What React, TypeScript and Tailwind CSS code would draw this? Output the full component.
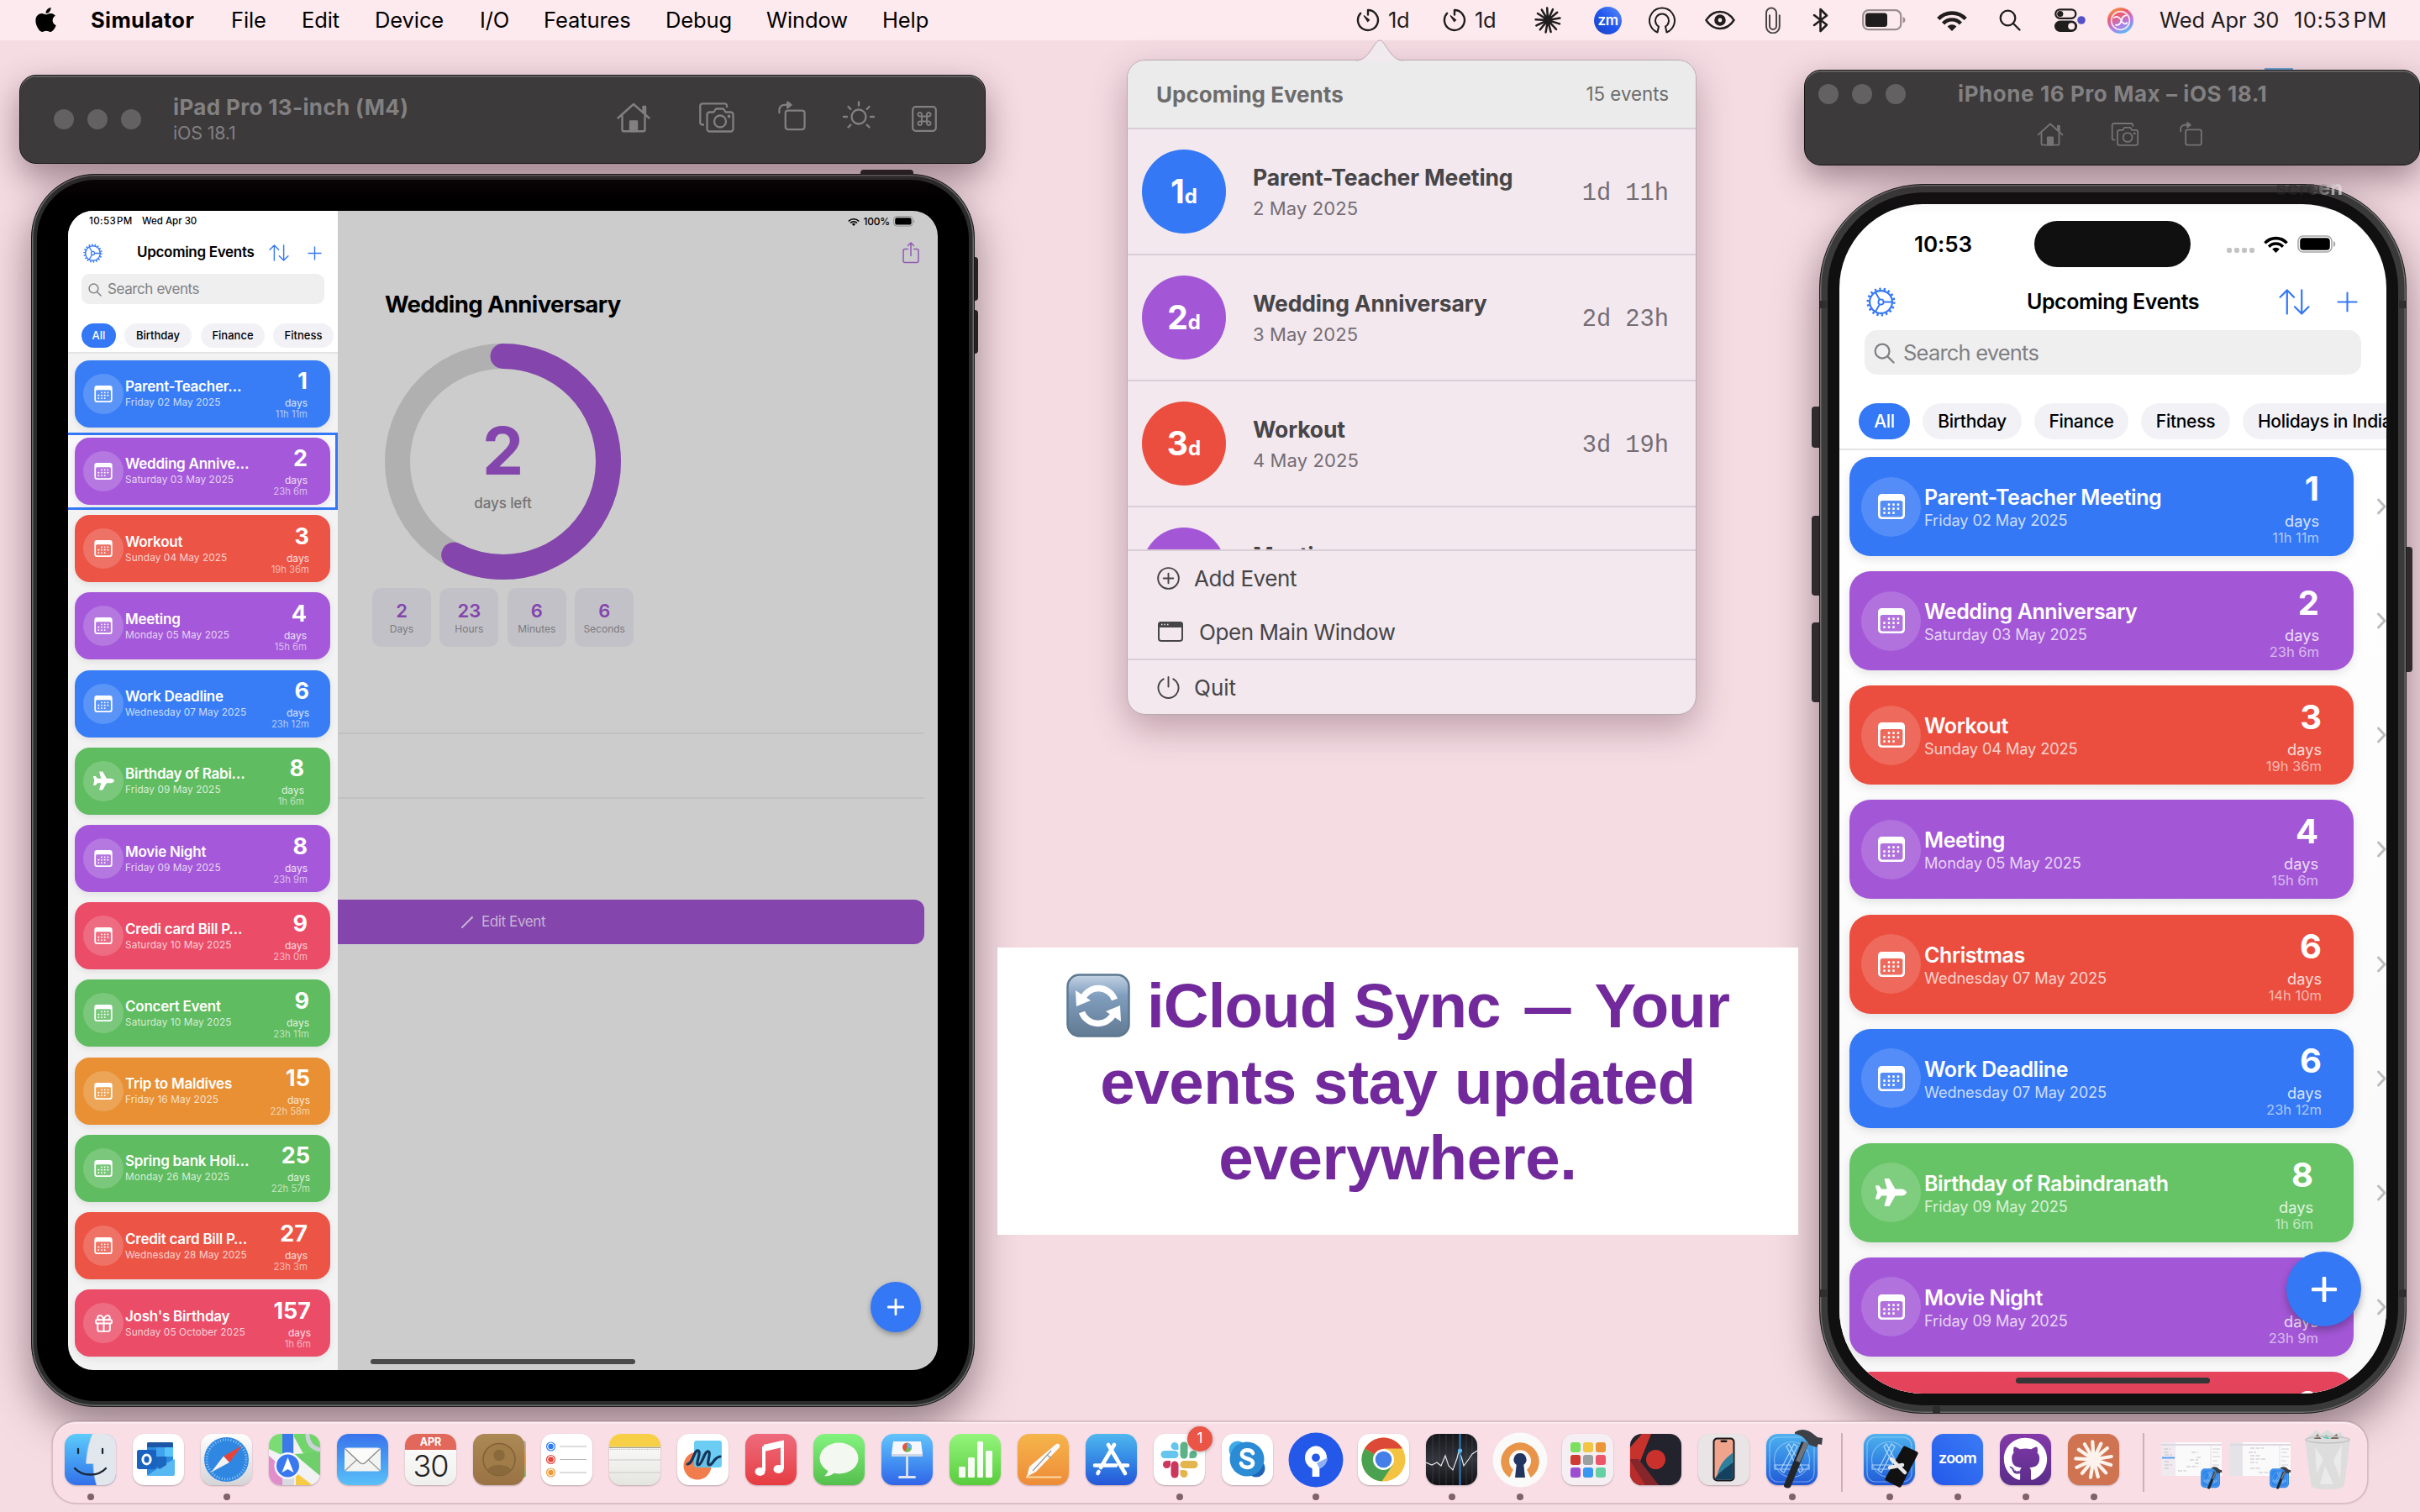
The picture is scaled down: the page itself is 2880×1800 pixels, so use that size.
import React from "react";
import { FaApple, FaGithub, FaPlane } from "react-icons/fa";
import { Gift } from "lucide-react";

type IconProps = { className?: string };

/* ---------- shared glyphs ---------- */

const Wifi = ({ className = "" }: IconProps) => (
  <svg viewBox="0 0 36 26" className={className} fill="none" stroke="currentColor" strokeWidth="4.4">
    <path d="M1.8 11.6A22 22 0 0 1 34.2 11.6" />
    <path d="M7.6 17A14 14 0 0 1 28.4 17" />
    <path d="M18 26l-5.4-5.6a7.6 7.6 0 0 1 10.8 0z" fill="currentColor" stroke="none" />
  </svg>
);

const Gear = ({ className = "" }: IconProps) => (
  <svg viewBox="0 0 36 36" className={className} fill="none" stroke="currentColor">
    <circle cx="18" cy="18" r="16" strokeWidth="3" strokeDasharray="2.4 3.185" />
    <circle cx="18" cy="18" r="13.8" strokeWidth="2.2" />
    <circle cx="18" cy="18" r="3.2" strokeWidth="1.9" />
    <path d="M21.2 18h10M16.4 15.2L11.4 6.4M16.4 20.8l-5 8.8" strokeWidth="2" />
  </svg>
);

const Sort = ({ className = "" }: IconProps) => (
  <svg viewBox="0 0 38 32" className={className} fill="none" stroke="currentColor" strokeWidth="2.3" strokeLinecap="round" strokeLinejoin="round">
    <path d="M10 30.5V1.5M1.5 10L10 1.5l8.5 8.5M28 1.5v29M19.5 22l8.500 8.500 8.500-8.500" />
  </svg>
);

const Plus = ({ className = "", w = 2.2 }: IconProps & { w?: number }) => (
  <svg viewBox="0 0 26 26" className={className} fill="none" stroke="currentColor" strokeWidth={w} strokeLinecap="round">
    <path d="M13 1.5v23M1.5 13h23" />
  </svg>
);

const Search = ({ className = "" }: IconProps) => (
  <svg viewBox="0 0 26 26" className={className} fill="none" stroke="currentColor" strokeWidth="2.3" strokeLinecap="round">
    <circle cx="10.5" cy="10.5" r="8.8" />
    <path d="M17 17l7.5 7.5" />
  </svg>
);

const calendarDots = [
  [13, 12.6], [18.5, 12.6], [24, 12.6],
  [7.5, 17.6], [13, 17.6], [18.5, 17.6], [24, 17.6],
  [7.5, 22.6], [13, 22.6], [18.5, 22.6],
];

const CalendarGlyph = ({ className = "" }: IconProps) => (
  <svg viewBox="0 0 32 30" className={className} fill="currentColor">
    <path fillRule="evenodd" d="M4.500 0h23A4.500 4.500 0 0 1 32 4.500v21a4.500 4.500 0 0 1-4.500 4.500h-23A4.500 4.500 0 0 1 0 25.500v-21A4.500 4.500 0 0 1 4.500 0zM2.600 10.500v14.200c0 1.600 1 2.700 2.700 2.700h21.400c1.700 0 2.700-1.100 2.700-2.700V10.500c0-1.600-1-2.500-2.700-2.500H5.300c-1.700 0-2.700.9-2.700 2.500z" />
    {calendarDots.map(([x, y]) => (
      <rect key={`${x}-${y}`} x={x - 1.3} y={y - 1.3} width="2.6" height="2.6" rx="0.7" />
    ))}
  </svg>
);

const Home = ({ className = "" }: IconProps) => (
  <svg viewBox="0 0 40 36" className={className} fill="none" stroke="currentColor" strokeWidth="2.4" strokeLinejoin="round" strokeLinecap="round">
    <path d="M1.5 18.5L20 2l18.500 16.500M31.500 12V5h2.500v9.500" />
    <path d="M6.500 16v16.500c0 1 .7 1.700 1.700 1.700h23.600c1 0 1.700-.7 1.700-1.700V16" />
    <path d="M16 34v-11.500h8V34z" fill="currentColor" />
  </svg>
);

const Cameras = ({ className = "" }: IconProps) => (
  <svg viewBox="0 0 42 36" className={className} fill="none" stroke="currentColor" strokeWidth="2.3" strokeLinejoin="round">
    <path d="M6 26.500H4A2.700 2.700 0 0 1 1.300 24V4A2.700 2.700 0 0 1 4 1.300h26A2.700 2.700 0 0 1 33 4v2" />
    <path d="M12.500 11.500h5l2.500-4h9l2.500 4h6a3 3 0 0 1 3 3v17a3 3 0 0 1-3 3h-25a3 3 0 0 1-3-3v-17a3 3 0 0 1 3-3z" />
    <circle cx="25" cy="22.5" r="7" />
    <circle cx="35.5" cy="16.5" r="0.8" fill="currentColor" />
  </svg>
);

const Rotate = ({ className = "" }: IconProps) => (
  <svg viewBox="0 0 34 36" className={className} fill="none" stroke="currentColor" strokeWidth="2.3" strokeLinejoin="round" strokeLinecap="round">
    <rect x="9" y="11.5" width="23.5" height="23" rx="3" />
    <path d="M1.500 14v-3.500a6 6 0 0 1 6-6H15" />
    <path d="M11.500 1l4.500 3.500-4.500 3.500z" fill="currentColor" />
  </svg>
);

const Sun = ({ className = "" }: IconProps) => (
  <svg viewBox="0 0 40 36" className={className} fill="none" stroke="currentColor" strokeWidth="2.4" strokeLinecap="round">
    <circle cx="20" cy="19" r="8.5" />
    <path d="M20 1.500v4M2 19h4M34 19h4M7.500 7l2.800 2.800M32.500 7l-2.800 2.800M7.500 31.500l2.800-2.800M32.500 31.500l-2.800-2.800" />
  </svg>
);

const CommandKey = ({ className = "" }: IconProps) => (
  <svg viewBox="0 0 30 31" className={className} fill="none" stroke="currentColor" strokeWidth="2.2">
    <rect x="1.2" y="1.2" width="27.6" height="28.6" rx="3.5" />
    <path strokeWidth="1.9" d="M12 12.500h6v6h-6zM12 12.500h-2.200a2.300 2.300 0 1 1 2.200-2.300zM18 12.500h2.200a2.300 2.300 0 1 0-2.200-2.300zM12 18.500h-2.200a2.300 2.300 0 1 0 2.200 2.300zM18 18.500h2.200a2.300 2.300 0 1 1-2.200 2.300z" />
  </svg>
);

const Burst = ({ className = "", w = 3 }: IconProps & { w?: number }) => (
  <svg viewBox="0 0 40 40" className={className} stroke="currentColor" strokeWidth={w} strokeLinecap="round">
    <path d="M20 20L19 2M20 20l7.500-16M20 20L34 8.500M20 20l18-3M20 20l17.500 5.500M20 20l12.500 13.500M20 20l4.500 17.500M20 20l-3 18M20 20L8.500 34M20 20L3 28M20 20L2 19M20 20L5 10M20 20L11 4.500" />
  </svg>
);

/* ---------- menu bar ---------- */

const Timer = ({ className = "" }: IconProps) => (
  <svg viewBox="0 0 28 28" className={className} fill="none" stroke="currentColor" strokeWidth="2.4" strokeLinecap="round">
    <path d="M14 2v5.500M14 2A12 12 0 1 1 5.200 5.800" />
    <path d="M9 8.500l6.500 5.200-1.800 1.800z" fill="currentColor" strokeWidth="1.2" />
  </svg>
);

const menus = [
  { label: "File", cls: "w-[84px]" },
  { label: "Edit", cls: "w-[87px]" },
  { label: "Device", cls: "w-[125px]" },
  { label: "I/O", cls: "w-[76px]" },
  { label: "Features", cls: "w-[145px]" },
  { label: "Debug", cls: "w-[120px]" },
  { label: "Window", cls: "w-[138px]" },
  { label: "Help", cls: "w-[80px]" },
];

function MenuBar() {
  return (
    <header className="flex h-12 w-full items-center bg-[#fdeaee] pr-[36px] pl-10 text-[25.5px] leading-none tracking-[-0.1px] text-black">
      <FaApple className="-mt-0.5 h-[33px] w-[29px]" />
      <span className="ml-[39px] w-[167px] font-bold tracking-[0.4px]">Simulator</span>
      {menus.map((m) => (
        <span key={m.label} className={m.cls}>{m.label}</span>
      ))}
      <div className="ml-auto flex items-center text-[#1f1d1e]">
        <Timer className="h-7 w-7" />
        <span className="ml-[10px] w-[27px] tracking-[-0.3px]">1d</span>
        <Timer className="ml-[38px] h-7 w-7" />
        <span className="ml-[10px] w-[27px] tracking-[-0.3px]">1d</span>
        <Burst className="ml-[44px] h-8 w-8" w={3.2} />
        <span className="ml-[39px] flex h-[33px] w-[33px] items-center justify-center rounded-full bg-gradient-to-tr from-[#1b3fc4] via-[#2257ee] to-[#5b8df5] text-[17px] font-semibold tracking-[-0.5px] text-white">zm</span>
        <svg viewBox="0 0 32 32" className="ml-8 h-8 w-8" fill="none" stroke="currentColor" strokeWidth="2" strokeLinejoin="round">
          <path d="M10.500 30.500A15 15 0 1 1 21.500 30.500L20 23.500A8 8 0 1 0 12 23.500z" />
        </svg>
        <svg viewBox="0 0 36 24" className="ml-[35px] h-6 w-9" fill="none" stroke="currentColor" strokeWidth="2.4">
          <path d="M1.500 12C6 5 11.500 2 18 2s12 3 16.500 10c-4.500 7-10 10-16.500 10S6 19 1.500 12z" />
          <circle cx="18" cy="12" r="4.6" strokeWidth="4.4" />
        </svg>
        <svg viewBox="0 0 18 32" className="ml-9 h-8 w-[18px]" fill="none" stroke="#4b4547" strokeWidth="2">
          <path d="M5 9.500v13.500a4 4 0 0 0 8 0V7.500a6 6 0 0 0-12 0v16a7.500 7.500 0 0 0 15.800 0V9.500" />
        </svg>
        <svg viewBox="0 0 20 30" className="ml-[38px] h-[30px] w-5" fill="none" stroke="currentColor" strokeWidth="2.6" strokeLinejoin="round" strokeLinecap="round">
          <path d="M2 9l15 11.500-7.500 7.500V2l7.500 7.500L2 21" />
        </svg>
        <svg viewBox="0 0 52 26" className="ml-[39px] h-[26px] w-[52px]" fill="none">
          <rect x="1.2" y="1.2" width="45" height="23" rx="6.5" stroke="#9b8e92" strokeWidth="2.2" />
          <rect x="4" y="4.5" width="26" height="16.5" rx="3.500" fill="#1f1d1e" />
          <path d="M48.500 9c2.200.8 3 2.200 3 3.800s-.8 3-3 3.800z" fill="#9b8e92" />
        </svg>
        <Wifi className="ml-[37px] h-[26px] w-9" />
        <Search className="ml-[38px] h-[26px] w-[26px]" />
        <svg viewBox="0 0 37 28" className="ml-10 h-7 w-[37px]">
          <rect x="1.3" y="1.3" width="24" height="10.5" rx="5.2" fill="none" stroke="currentColor" strokeWidth="2.3" />
          <circle cx="6.8" cy="6.5" r="3.6" fill="currentColor" />
          <rect x="0" y="14.5" width="27" height="13.5" rx="6.7" fill="currentColor" />
          <circle cx="20.2" cy="21.2" r="4" fill="#fdeaee" />
          <circle cx="32" cy="14" r="4.8" fill="#5552c8" />
        </svg>
        <svg viewBox="0 0 30 30" className="ml-[26px] h-[31px] w-[31px]">
          <defs>
            <linearGradient id="siri" x1="0.2" y1="0" x2="0.7" y2="1">
              <stop offset="0" stopColor="#f2a23c" />
              <stop offset="0.3" stopColor="#ee5b6e" />
              <stop offset="0.65" stopColor="#b47be6" />
              <stop offset="1" stopColor="#4fc0f5" />
            </linearGradient>
          </defs>
          <circle cx="15" cy="15" r="15" fill="url(#siri)" />
          <circle cx="15" cy="15" r="10.5" fill="none" stroke="#fbe6ee" strokeWidth="1.6" />
          <path d="M7 12c4-3 7-1 9 3s5 5 7 2M9 20c4 1 6-1 7-5s3-6 6-6" fill="none" stroke="#fff" strokeWidth="1.6" />
        </svg>
        <span className="ml-[31px] w-[160px] tracking-[-0.1px] whitespace-nowrap">Wed Apr 30</span>
        <span className="w-[114px] tracking-[0.5px] whitespace-nowrap">10:53<span className="ml-[3px]">PM</span></span>
      </div>
    </header>
  );
}

/* ---------- events ---------- */

const tones = {
  blue: "bg-[#3478f6]",
  purple: "bg-[#a357d7]",
  red: "bg-[#eb4e3e]",
  green: "bg-[#67c466]",
};

const padTones = {
  blue: "bg-[#387df6]",
  purple: "bg-[#a559da]",
  red: "bg-[#ec5445]",
  green: "bg-[#5fbc60]",
  pink: "bg-[#eb4c67]",
  orange: "bg-[#e89033]",
};

type PadEvent = { title: string; date: string; n: string; time: string; tone: keyof typeof padTones; icon?: "plane" | "gift"; pr: string };

const padEvents: PadEvent[] = [
  { title: "Parent-Teacher…", date: "Friday 02 May 2025", n: "1", time: "11h 11m", tone: "blue", pr: "pr-[27px]" },
  { title: "Wedding Annive…", date: "Saturday 03 May 2025", n: "2", time: "23h 6m", tone: "purple", pr: "pr-[27px]" },
  { title: "Workout", date: "Sunday 04 May 2025", n: "3", time: "19h 36m", tone: "red", pr: "pr-[25px]" },
  { title: "Meeting", date: "Monday 05 May 2025", n: "4", time: "15h 6m", tone: "purple", pr: "pr-[28px]" },
  { title: "Work Deadline", date: "Wednesday 07 May 2025", n: "6", time: "23h 12m", tone: "blue", pr: "pr-[25px]" },
  { title: "Birthday of Rabi…", date: "Friday 09 May 2025", n: "8", time: "1h 6m", tone: "green", icon: "plane", pr: "pr-[31px]" },
  { title: "Movie Night", date: "Friday 09 May 2025", n: "8", time: "23h 9m", tone: "purple", pr: "pr-[27px]" },
  { title: "Credi card Bill P…", date: "Saturday 10 May 2025", n: "9", time: "23h 0m", tone: "pink", pr: "pr-[27px]" },
  { title: "Concert Event", date: "Saturday 10 May 2025", n: "9", time: "23h 11m", tone: "green", pr: "pr-[25px]" },
  { title: "Trip to Maldives", date: "Friday 16 May 2025", n: "15", time: "22h 58m", tone: "orange", pr: "pr-[24px]" },
  { title: "Spring bank Holi…", date: "Monday 26 May 2025", n: "25", time: "22h 57m", tone: "green", pr: "pr-[24px]" },
  { title: "Credit card Bill P…", date: "Wednesday 28 May 2025", n: "27", time: "23h 3m", tone: "red", pr: "pr-[27px]" },
  { title: "Josh's Birthday", date: "Sunday 05 October 2025", n: "157", time: "1h 6m", tone: "pink", icon: "gift", pr: "pr-[23px]" },
];

function PadIcon({ icon }: { icon?: "plane" | "gift" }) {
  if (icon === "plane") return <FaPlane className="h-[23px] w-[25px]" />;
  if (icon === "gift") return <Gift className="h-[25px] w-[25px]" strokeWidth={1.9} />;
  return <CalendarGlyph className="h-5 w-[22px]" />;
}

function PadCard({ e }: { e: PadEvent }) {
  return (
    <div className={`relative flex h-20 shrink-0 rounded-[18px] pl-2.5 text-white shadow-[0_3px_8px_rgba(0,0,0,0.08)] ${padTones[e.tone]} ${e.pr}`}>
      <div className="mt-4 flex h-12 w-12 items-center justify-center rounded-full bg-white/18">
        <PadIcon icon={e.icon} />
      </div>
      <div className="ml-0.5 pt-[22.5px] whitespace-nowrap">
        <div className="text-[17px] leading-[18px] font-semibold tracking-[-0.25px]">{e.title}</div>
        <div className="mt-1 text-[11.8px] leading-[13px] tracking-[0.1px] text-white/75">{e.date}</div>
      </div>
      <div className="ml-auto flex flex-col items-end pt-[11.5px] whitespace-nowrap">
        <div className="text-[27px] leading-[27px] font-bold">{e.n}</div>
        <div className="mt-1.5 text-[12px] leading-[13px] text-white/80">days</div>
        <div className="mt-px text-[11.3px] leading-[13px] text-white/60">{e.time}</div>
      </div>
    </div>
  );
}

/* ---------- iPad window ---------- */

function PadSidebar() {
  return (
    <aside className="flex h-full w-[321px] shrink-0 flex-col bg-[#f3f3f4]">
      <div className="h-[170px] shrink-0 border-b-2 border-[#e4e4e6] bg-white">
        <div className="flex items-center pt-[6px] pl-[25px] text-[11.5px] leading-[12px] font-medium whitespace-nowrap text-black">
          <span className="w-[63px] tracking-[0.4px]">10:53<span className="ml-px">PM</span></span>
          <span>Wed Apr 30</span>
        </div>
        <div className="mt-5 flex h-6 items-center pl-[18px] text-[#3478f6]">
          <Gear className="h-[23px] w-[23px]" />
          <span className="ml-[41px] w-[157px] text-[17px] font-semibold tracking-[-0.3px] whitespace-nowrap text-black">Upcoming Events</span>
          <Sort className="h-5 w-6" />
          <Plus className="ml-[22px] h-[17px] w-[17px]" />
        </div>
        <div className="mt-[13px] ml-4 flex h-9 w-[289px] items-center rounded-[9px] bg-[#efefef] pt-px pl-2 text-[17px] tracking-[-0.4px] text-[#7f7f84]">
          <Search className="mr-[7px] h-4 w-4" />
          Search events
        </div>
        <div className="mt-[23px] ml-4 flex text-[13px] leading-[29px] font-medium text-black">
          <span className="w-[41px] rounded-full bg-[#3478f6] text-center text-white">All</span>
          <span className="ml-2.5 w-[80px] rounded-full bg-[#f2f1f6] text-center">Birthday</span>
          <span className="ml-[11px] w-[76px] rounded-full bg-[#f2f1f6] text-center">Finance</span>
          <span className="ml-2.5 w-[72px] rounded-full bg-[#f2f1f6] text-center">Fitness</span>
        </div>
      </div>
      <div className="relative flex flex-col gap-[12.24px] pt-[7.6px] pr-[9px] pl-2">
        <div className="absolute top-[94px] -left-1 h-[92px] w-[325px] border-[3px] border-[#3478f6] bg-[#f8f8fa]" />
        {padEvents.map((e) => (
          <PadCard key={e.title} e={e} />
        ))}
      </div>
    </aside>
  );
}

function CountTile({ n, label }: { n: string; label: string }) {
  return (
    <div className="flex h-[70px] w-[70px] flex-col items-center rounded-[11px] bg-[#c2c1c7] pt-4">
      <div className="text-[22px] leading-[22px] font-semibold text-[#8445ad]">{n}</div>
      <div className="mt-[5px] text-[12px] leading-[12px] text-[#7b7a7f]">{label}</div>
    </div>
  );
}

function PadDetail() {
  return (
    <section className="relative flex h-full flex-1 flex-col bg-[#cccccc]">
      <div className="flex h-6 items-center justify-end gap-1 pt-[1px] pr-[27px] text-[12px] font-medium text-black">
        <Wifi className="h-[10px] w-[14px]" />
        <span className="tracking-[-0.2px]">100%</span>
        <svg viewBox="0 0 26 13" className="h-[13px] w-[26px]">
          <rect x="0.6" y="0.6" width="22.5" height="11.5" rx="3.5" fill="none" stroke="#8f8f8f" />
          <rect x="2.2" y="2.2" width="19.4" height="8.4" rx="2.2" />
          <path d="M24.300 4.500c1.400.6 1.400 3.200 0 3.800z" fill="#8f8f8f" />
        </svg>
      </div>
      <div className="flex justify-end pt-3 pr-[22px] text-[#8f5bb4]">
        <svg viewBox="0 0 20 26" className="h-[27px] w-5" fill="none" stroke="currentColor" strokeWidth="1.5" strokeLinecap="round">
          <path d="M6.500 9H3a2 2 0 0 0-2 2v12a2 2 0 0 0 2 2h14a2 2 0 0 0 2-2V11a2 2 0 0 0-2-2h-3.500M10 17V1.500M6.500 5L10 1.500 13.500 5" />
        </svg>
      </div>
      <h2 className="mt-[34px] ml-[56px] text-[27.5px] leading-[28px] font-bold tracking-[-0.6px] text-black">Wedding Anniversary</h2>
      <div className="relative mt-[33px] ml-[56px] h-[281px] w-[281px]">
        <svg viewBox="0 0 281 281" className="h-full w-full -rotate-90" fill="none" strokeWidth="30">
          <circle cx="140.5" cy="140.5" r="125.5" stroke="#b0b0b0" />
          <circle cx="140.5" cy="140.5" r="125.5" stroke="#8445ad" strokeLinecap="round" pathLength="360" strokeDasharray="207.7 360" />
        </svg>
        <div className="absolute inset-0 flex flex-col items-center pt-[88px]">
          <div className="text-[78px] leading-[80px] font-bold text-[#8445ad]">2</div>
          <div className="mt-[13px] text-[17px] leading-[18px] font-medium tracking-[-0.1px] text-[#747474]">days left</div>
        </div>
      </div>
      <div className="mt-[10px] ml-[41px] flex gap-[10.4px]">
        <CountTile n="2" label="Days" />
        <CountTile n="23" label="Hours" />
        <CountTile n="6" label="Minutes" />
        <CountTile n="6" label="Seconds" />
      </div>
      <div className="mt-[102px] mr-[16px] h-[79px] border-y-2 border-[#c1c1c1]" />
      <div className="mt-[120px] mr-[16px] flex h-[53px] items-center rounded-r-xl bg-[#8445ad] pl-[147px] text-[17px] tracking-[-0.4px] text-[#c9b3d6]">
        <svg viewBox="0 0 14 14" className="mr-2.5 h-[14px] w-[14px]" stroke="currentColor" fill="none" strokeLinecap="round">
          <path d="M1 13L11 3" strokeWidth="2" />
          <path d="M12 2l.8-.8" strokeWidth="2.4" />
        </svg>
        Edit Event
      </div>
      <div className="absolute right-5 bottom-[45px] flex h-[60px] w-[60px] items-center justify-center rounded-full bg-[#3478f6] text-white shadow-[0_3px_6px_rgba(0,0,0,0.3)]">
        <Plus className="h-5 w-5" w={3.6} />
      </div>
      <div className="absolute bottom-[7px] left-[39px] h-[6px] w-[315px] rounded-full bg-[#494949]" />
    </section>
  );
}

function PadWindow() {
  return (
    <>
      <div className="absolute top-[202px] left-[1024px] h-2 w-[63px] rounded-t bg-[#232523]" />
      <div className="absolute top-[306px] left-[1156px] h-[52px] w-2 rounded-r bg-[#232523]" />
      <div className="absolute top-[369px] left-[1156px] h-[52px] w-2 rounded-r bg-[#232523]" />
      <div className="absolute top-[207px] left-[37px] h-[1468px] w-[1123px] rounded-[76px] border border-[#161716] bg-[#2b2d2c] p-1.5 shadow-[inset_0_0_0_1.5px_#6c6e6d,0_22px_50px_rgba(50,25,35,0.5)]">
        <div className="h-full w-full rounded-[70px] bg-black px-[37px] pt-[37px] pb-[37px]">
          <div className="flex h-full w-full overflow-hidden rounded-[30px]">
            <PadSidebar />
            <PadDetail />
          </div>
        </div>
      </div>
      <div className="absolute top-[89px] left-[23px] flex h-[106px] w-[1150px] items-center rounded-[20px] border border-[#161516] bg-[#3c3a3b] pl-10 text-[#828081] shadow-[inset_0_1.5px_0_#706e6f,0_16px_40px_rgba(50,25,35,0.45)]">
        <div className="flex gap-4">
          <span className="h-6 w-6 rounded-full bg-[#636162]" />
          <span className="h-6 w-6 rounded-full bg-[#636162]" />
          <span className="h-6 w-6 rounded-full bg-[#636162]" />
        </div>
        <div className="ml-[38px] w-[528px]">
          <div className="text-[26px] leading-[28px] font-bold tracking-[0.35px]">iPad Pro 13-inch (M4)</div>
          <div className="mt-1 text-[21.5px] leading-6 tracking-[-0.2px]">iOS 18.1</div>
        </div>
        <Home className="-mt-1 h-9 w-10" />
        <Cameras className="-mt-1 ml-[58px] h-9 w-[42px]" />
        <Rotate className="-mt-2 ml-[52px] h-9 w-[33px]" />
        <Sun className="-mt-2 ml-[43px] h-9 w-10" />
        <CommandKey className="-mt-0.5 ml-[43px] h-[31px] w-[30px]" />
      </div>
    </>
  );
}

/* ---------- menu bar popover ---------- */

function PopRow({ n, title, date, left, tone }: { n: string; title: string; date: string; left: string; tone: string }) {
  return (
    <div className="flex h-[150px] shrink-0 items-start border-b-2 border-[#d9ced6] pr-8 pl-[17px]">
      <div className={`mt-6 flex h-[100px] w-[100px] items-baseline justify-center rounded-full pt-[25px] font-bold text-white ${tone}`}>
        <span className="text-[39px] leading-[50px]">{n}</span>
        <span className="text-[24px] leading-[50px]">d</span>
      </div>
      <div className="ml-[32px] pt-[43px]">
        <div className="text-[26.5px] leading-[28px] font-bold tracking-[-0.15px] text-[#474547]">{title}</div>
        <div className="mt-[11px] text-[22px] leading-6 tracking-[0.1px] text-[#756d74]">{date}</div>
      </div>
      <div className="ml-auto pt-[63px] font-['Liberation_Mono',monospace] text-[28.7px] leading-[28px] whitespace-pre text-[#756d74]">{left}</div>
    </div>
  );
}

function Popover() {
  return (
    <div className="absolute top-[71px] left-[1341px] h-[780px] w-[678px] rounded-[22px] border border-[#b9a8af] bg-[#f2e8ee] shadow-[0_16px_44px_rgba(60,20,40,0.3)]">
      <svg viewBox="0 0 56 27" className="absolute -top-[25px] left-[272px] h-[27px] w-14">
        <path d="M0 25.500C9 25 13 19 18 12c4-6 7-11 10-11s6 5 10 11c5 7 9 13 18 13.500V27H0z" fill="#f0e9ed" />
        <path d="M0 25C9 24.500 13 19 18 12c4-6 7-11 10-11s6 5 10 11c5 7 9 12.500 18 13" fill="none" stroke="#b9a8af" />
      </svg>
      <div className="flex h-full flex-col overflow-hidden rounded-[21px]">
        <div className="flex h-[82px] shrink-0 items-center justify-between border-b-2 border-[#d9ced6] bg-[#ebebeb] pr-8 pl-[34px] text-[#6d6c6c]">
          <span className="text-[26px] font-bold">Upcoming Events</span>
          <span className="text-[22.3px]">15 events</span>
        </div>
        <div className="flex h-[500px] shrink-0 flex-col overflow-hidden">
          <PopRow n="1" title="Parent-Teacher Meeting" date="2 May 2025" left="1d 11h" tone="bg-[#3478f6]" />
          <PopRow n="2" title="Wedding Anniversary" date="3 May 2025" left="2d 23h" tone="bg-[#a357d7]" />
          <PopRow n="3" title="Workout" date="4 May 2025" left="3d 19h" tone="bg-[#eb4e3e]" />
          <PopRow n="4" title="Meeting" date="5 May 2025" left="4d 15h" tone="bg-[#a357d7]" />
        </div>
        <div className="flex h-[132px] shrink-0 flex-col border-y-2 border-[#d9ced6] text-[26px] tracking-[-0.42px] text-[#474547]">
          <div className="flex h-16 items-center pl-[35px]">
            <svg viewBox="0 0 28 28" className="mr-[17px] h-[27px] w-[27px]" fill="none" stroke="currentColor" strokeWidth="2" strokeLinecap="round">
              <circle cx="14" cy="14" r="12.8" />
              <path d="M14 8v12M8 14h12" />
            </svg>
            Add Event
          </div>
          <div className="flex h-16 items-center pl-9">
            <svg viewBox="0 0 30 24" className="mr-[19px] h-6 w-[30px]" fill="none" stroke="currentColor" strokeWidth="2">
              <rect x="1" y="1" width="28" height="22" rx="3" />
              <path d="M1 4a3 3 0 0 1 3-3h22a3 3 0 0 1 3 3v2H1z" fill="currentColor" />
              <path d="M4 3.500h1.500M7.500 3.500H9M11 3.500h1.500" stroke="#f2e8ee" strokeWidth="1.6" />
            </svg>
            Open Main Window
          </div>
        </div>
        <div className="flex flex-1 items-center pt-px pl-[35px] text-[26px] text-[#474547]">
          <svg viewBox="0 0 28 28" className="mr-[17px] h-[27px] w-[27px]" fill="none" stroke="currentColor" strokeWidth="2" strokeLinecap="round">
            <path d="M14 1v12M8 3.500a12.500 12.500 0 1 0 12 0" />
          </svg>
          Quit
        </div>
      </div>
    </div>
  );
}

/* ---------- caption ---------- */

function Caption() {
  return (
    <div className="absolute top-[1128px] left-[1187px] h-[342px] w-[953px] bg-white pt-[25px] text-center font-['Liberation_Sans',Arial,sans-serif] text-[74.5px] leading-[90.5px] font-bold tracking-[-0.4px] text-[#72299b]">
      <div className="flex items-center justify-center tracking-[-0.9px]">
        <svg viewBox="0 0 76 76" className="-mt-0.5 mr-[20px] h-[76px] w-[76px]">
          <defs>
            <linearGradient id="sync" x1="0" y1="0" x2="0" y2="1">
              <stop offset="0" stopColor="#c3d3e3" />
              <stop offset="0.35" stopColor="#7f9dbd" />
              <stop offset="1" stopColor="#627a93" />
            </linearGradient>
          </defs>
          <rect x="1.5" y="1.5" width="73" height="73" rx="14" fill="url(#sync)" stroke="#5d7890" strokeWidth="2.5" />
          <path d="M19 31a20.500 20.500 0 0 1 38.500 0M57 46a20.500 20.500 0 0 1-38.500 0" fill="none" stroke="#fff" strokeWidth="7.5" />
          <path d="M11 20l1 19 17-7zM65 57l-1-19-17 7z" fill="#fff" />
        </svg>
        <span>iCloud Sync <span className="inline-block scale-x-[0.74]">—</span> Your</span>
      </div>
      <div>events stay updated</div>
      <div>everywhere.</div>
    </div>
  );
}

/* ---------- iPhone window ---------- */

type PhoneEvent = { title: string; date: string; n: string; time: string; tone: keyof typeof tones; plane?: boolean; pr: string };

const phoneEvents: PhoneEvent[] = [
  { title: "Parent-Teacher Meeting", date: "Friday 02 May 2025", n: "1", time: "11h 11m", tone: "blue", pr: "pr-[41px]" },
  { title: "Wedding Anniversary", date: "Saturday 03 May 2025", n: "2", time: "23h 6m", tone: "purple", pr: "pr-[41px]" },
  { title: "Workout", date: "Sunday 04 May 2025", n: "3", time: "19h 36m", tone: "red", pr: "pr-[38px]" },
  { title: "Meeting", date: "Monday 05 May 2025", n: "4", time: "15h 6m", tone: "purple", pr: "pr-[42px]" },
  { title: "Christmas", date: "Wednesday 07 May 2025", n: "6", time: "14h 10m", tone: "red", pr: "pr-[38px]" },
  { title: "Work Deadline", date: "Wednesday 07 May 2025", n: "6", time: "23h 12m", tone: "blue", pr: "pr-[38px]" },
  { title: "Birthday of Rabindranath", date: "Friday 09 May 2025", n: "8", time: "1h 6m", tone: "green", plane: true, pr: "pr-[48px]" },
  { title: "Movie Night", date: "Friday 09 May 2025", n: "8", time: "23h 9m", tone: "purple", pr: "pr-[42px]" },
];

function PhoneRow({ e }: { e: PhoneEvent }) {
  return (
    <div className="flex shrink-0 items-center">
      <div className={`flex h-[118px] w-[600px] shrink-0 rounded-[25px] pl-[14px] text-white shadow-[0_4px_12px_rgba(0,0,0,0.1)] ${tones[e.tone]} ${e.pr}`}>
        <div className="mt-[23.5px] flex h-[71px] w-[71px] items-center justify-center rounded-full bg-white/16">
          {e.plane ? <FaPlane className="h-[33px] w-[37px]" /> : <CalendarGlyph className="h-[30px] w-8" />}
        </div>
        <div className="ml-[4px] pt-[35px] whitespace-nowrap">
          <div className="text-[25px] leading-[26px] font-semibold tracking-[-0.42px]">{e.title}</div>
          <div className="mt-[4px] text-[18.2px] leading-5 tracking-[-0.1px] text-white/75">{e.date}</div>
        </div>
        <div className="ml-auto flex flex-col items-end pt-[18px] whitespace-nowrap">
          <div className="text-[40px] leading-10 font-bold">{e.n}</div>
          <div className="mt-2 text-[18.2px] leading-5 text-white/80">days</div>
          <div className="text-[16.5px] leading-5 text-white/60">{e.time}</div>
        </div>
      </div>
      <svg viewBox="0 0 12 20" className="ml-[27px] h-5 w-3 shrink-0" fill="none" stroke="#bdbdc0" strokeWidth="3" strokeLinecap="round" strokeLinejoin="round">
        <path d="M2.500 2l7.500 8-7.500 8" />
      </svg>
    </div>
  );
}

function PhoneScreen() {
  return (
    <div className="relative flex h-full w-full flex-col overflow-hidden rounded-[100px] bg-white">
      <div className="flex h-[95px] shrink-0 items-center">
        <span className="ml-[89px] w-[143px] text-[26px] font-semibold tracking-[-0.1px] text-black">10:53</span>
        <span className="h-[55px] w-[186px] rounded-full bg-[#111011]" />
        <span className="mt-[14px] ml-[43px] flex gap-[3px]">
          <i className="h-1.5 w-1.5 rounded-[2px] bg-[#c3c3c3]" />
          <i className="h-1.5 w-1.5 rounded-[2px] bg-[#c3c3c3]" />
          <i className="h-1.5 w-1.5 rounded-[2px] bg-[#c3c3c3]" />
          <i className="h-1.5 w-1.5 rounded-[2px] bg-[#c3c3c3]" />
        </span>
        <Wifi className="ml-[11px] h-[21px] w-[29px] text-black" />
        <svg viewBox="0 0 46 21" className="ml-[11px] h-[21px] w-[46px]">
          <rect x="1" y="1" width="40" height="19" rx="6" fill="none" stroke="#a5a5a5" strokeWidth="1.6" />
          <rect x="3.2" y="3.2" width="35.6" height="14.6" rx="4" />
          <path d="M43 7c3 1 3 6 0 7z" fill="#a5a5a5" />
        </svg>
      </div>
      <div className="flex h-[42px] shrink-0 items-center pl-8 text-[#3478f6]">
        <Gear className="h-[35px] w-[35px]" />
        <span className="ml-[156px] w-[300px] pt-px text-[25px] font-semibold tracking-[-0.45px] text-black">Upcoming Events</span>
        <Sort className="h-[31px] w-[37px]" />
        <Plus className="ml-8 h-[25px] w-[25px]" />
      </div>
      <div className="mt-[13px] ml-[30px] flex h-[53px] w-[591px] shrink-0 items-center rounded-[15px] bg-[#efefef] pt-px pl-[11px] text-[25.5px] tracking-[-0.8px] text-[#7f7f84]">
        <Search className="mr-[10px] h-[25px] w-[25px]" />
        Search events
      </div>
      <div className="mt-[34px] ml-[23px] flex shrink-0 gap-[15px] text-[21px] leading-[43px] font-medium tracking-[-0.3px] whitespace-nowrap text-black">
        <span className="w-[61px] shrink-0 rounded-full bg-[#3478f6] text-center text-white">All</span>
        <span className="w-[118px] shrink-0 rounded-full bg-[#f2f1f6] text-center">Birthday</span>
        <span className="w-[112px] shrink-0 rounded-full bg-[#f2f1f6] text-center">Finance</span>
        <span className="w-[106px] shrink-0 rounded-full bg-[#f2f1f6] text-center">Fitness</span>
        <span className="w-[210px] shrink-0 rounded-full bg-[#f2f1f6] pl-[18px]">Holidays in India</span>
      </div>
      <div className="mt-[11px] flex flex-col gap-[18.15px] border-t-2 border-[#e3e3e5] bg-gradient-to-b from-white to-[#f8f8f9] pt-[8px] pl-3">
        {phoneEvents.map((e) => (
          <PhoneRow key={e.title} e={e} />
        ))}
        <div className="flex h-[118px] w-[600px] shrink-0 justify-end rounded-[25px] bg-gradient-to-b from-[#e5445c] to-[#dc3f56] pt-[18px] pr-[41px] text-[40px] leading-10 font-bold text-white">9</div>
      </div>
      <div className="absolute right-[30px] bottom-[80px] flex h-[89px] w-[89px] items-center justify-center rounded-full bg-[#3478f6] text-white shadow-[0_5px_10px_rgba(0,0,0,0.28)]">
        <Plus className="h-[30px] w-[30px]" w={4} />
      </div>
      <div className="absolute bottom-3 left-[210px] h-[7px] w-[231px] rounded-full bg-[#353535]" />
    </div>
  );
}

function PhoneWindow() {
  return (
    <>
      <div className="absolute top-[484px] left-[2156px] h-[49px] w-4 rounded-l bg-[#303030]" />
      <div className="absolute top-[614px] left-[2156px] h-[95px] w-4 rounded-l bg-[#303030]" />
      <div className="absolute top-[741px] left-[2156px] h-[95px] w-4 rounded-l bg-[#303030]" />
      <div className="absolute top-[651px] left-[2856px] h-[149px] w-[15px] rounded-r bg-[#303030]" />
      <div className="absolute top-[219px] left-[2165px] h-[1464px] w-[699px] rounded-[124px] border border-[#1c1c1c] bg-[#3a3a3a] p-[9px] shadow-[inset_0_0_0_1.5px_#6d6d6d,0_22px_50px_rgba(50,25,35,0.5)]">
        <div className="h-full w-full rounded-[115px] bg-[#111011] px-[14px] py-[14px]">
          <PhoneScreen />
        </div>
        <span className="absolute top-[138px] left-0 h-[9px] w-2 bg-[#2e2e2e]" />
        <span className="absolute top-[138px] right-0 h-[9px] w-2 bg-[#2e2e2e]" />
        <span className="absolute bottom-[138px] left-0 h-[9px] w-2 bg-[#2e2e2e]" />
        <span className="absolute right-0 bottom-[138px] h-[9px] w-2 bg-[#2e2e2e]" />
        <span className="absolute bottom-0 left-[134px] h-2 w-[9px] bg-[#2e2e2e]" />
      </div>
      <div className="absolute top-[210px] left-[2708px] bg-gradient-to-r from-[#2a2a2a]/50 from-50% to-white/70 to-90% bg-clip-text text-[24px] leading-7 font-bold text-transparent">screen</div>
      <div className="absolute top-[81px] left-[2695px] h-2 w-[34px] bg-[#6ba3d6]" />
      <div className="absolute top-[83px] left-[2147px] flex h-[114px] w-[733px] flex-col rounded-[20px] border border-[#161516] bg-[#3c3a3b] text-[#828081] shadow-[inset_0_1.5px_0_#706e6f,0_16px_40px_rgba(50,25,35,0.45)]">
        <div className="mt-4 flex h-6 items-center gap-4 pl-4">
          <span className="h-6 w-6 rounded-full bg-[#636162]" />
          <span className="h-6 w-6 rounded-full bg-[#636162]" />
          <span className="h-6 w-6 rounded-full bg-[#636162]" />
          <span className="ml-[46px] text-[26px] leading-6 font-bold tracking-[0.58px] whitespace-nowrap">iPhone 16 Pro Max – iOS 18.1</span>
        </div>
        <div className="mt-[21px] flex h-[30px] items-center pl-[276px] text-[#757374]">
          <Home className="h-7 w-8" />
          <Cameras className="ml-[56px] h-[28px] w-[34px]" />
          <Rotate className="-mt-0.5 ml-[48px] h-[29px] w-[27px]" />
        </div>
      </div>
    </>
  );
}

/* ---------- dock ---------- */

type DockAppProps = { running?: boolean; bg?: string; children?: React.ReactNode; clip?: boolean; flat?: boolean };

function DockApp({ running, bg = "bg-white", children, clip = true, flat }: DockAppProps) {
  return (
    <div className="relative h-[61px] w-[61px] shrink-0">
      <div className={`h-full w-full rounded-[14px] ${bg} ${clip ? "overflow-hidden" : ""} ${flat ? "" : "shadow-[0_1px_2px_rgba(0,0,0,0.25)]"}`}>{children}</div>
      {running && <span className="absolute top-[71px] left-[26.5px] h-2 w-2 rounded-full bg-[#7f626c]" />}
    </div>
  );
}

const Art = ({ children, className = "h-full w-full" }: { children: React.ReactNode; className?: string }) => (
  <svg viewBox="0 0 61 61" className={className} fill="none">{children}</svg>
);

const Blueprint = () => (
  <g stroke="#bfe3ff" strokeWidth="1.2" opacity="0.85">
    <rect x="4" y="4" width="53" height="53" rx="10" opacity="0.6" />
    <circle cx="30.5" cy="30.5" r="21" opacity="0.6" />
    <path d="M33 12L17 43l4 3 16-31zM27 12l17 31-4 3L24 15zM10 37h41v5H10z" />
  </g>
);

const Hammer = () => (
  <g>
    <path d="M42 9l8 3-21 51c-2 3-9 1-8-2z" fill="#23262b" />
    <path d="M45 9l5 3-10 22-5-2z" fill="#70757d" />
    <path d="M34-2c7-5 16-4 23 3l4 3 6 1-1 8-4-1-2 4-9-3c-4-7-9-12-17-13z" fill="#3d4147" />
  </g>
);

function Thumb({ second }: { second?: boolean }) {
  return (
    <div className="relative mt-[10px] h-10 w-[72px] shrink-0">
      <svg viewBox="0 0 72 40" className="h-10 w-[72px]">
        <rect width="72" height="40" fill="#fbfafb" />
        <rect width={second ? 15 : 17} height="40" fill={second ? "#e6e3e8" : "#efeaf0"} />
        <path d="M0 3h72" stroke="#ddd7e0" strokeWidth="2" />
        {!second && <path d="M1 18.500h15" stroke="#5a9df5" strokeWidth="2" />}
        <path d={second ? "M24 7h16M22 12h9M24 16h12M24 20h18M24 24h9M24 31h12M34 36h12" : "M3 8h8M3 12h7M4 15h9M4 23h6M4 27h9M4 31h6M20 34h10M36 12h8M42 18h6M34 21h10M40 25h7M30 29h14"} stroke="#c4bfc6" strokeWidth="1" strokeDasharray="5 1.5" />
        <path d="M59 4v36" stroke="#e4e0e6" />
        <path d="M61 8h9M61 12h7M61 17h9M61 22h6M61 27h8" stroke="#d2cdd5" strokeWidth="1.2" />
      </svg>
      <div className="absolute top-[29px] left-[46px]">
        <svg viewBox="-2 -6 70 72" className="h-[27px] w-[27px]" fill="none">
          <rect width="61" height="61" rx="13" fill="#2f86ea" />
          <Blueprint />
          <Hammer />
        </svg>
      </div>
    </div>
  );
}

function Dock() {
  return (
    <nav className="absolute top-[1692px] left-[62px] flex h-[98px] w-[2756px] items-start rounded-[28px] border border-[#d9bcc6] bg-[#f9dee6] pt-[14px] pl-[14px] shadow-[inset_0_1.5px_0_#fdeef2,0_0_2px_rgba(90,50,65,0.5)]">
      <div className="flex gap-5">
        <DockApp running bg="bg-gradient-to-b from-[#5ecbfa] to-[#3470ea]">
          <Art>
            <path d="M33 0C28 12 26 24 25.500 35.500h8.500c0 9 1.500 18 4 25.500H61V0z" fill="#e2e7ee" />
            <path d="M33 0C28 12 26 24 25.500 35.500h8.500c0 9 1.500 18 4 25.500" stroke="#b9c9da" strokeWidth="0.8" />
            <path d="M12 41c9 10 28 10 37 0M16 18v5M45 18v5" stroke="#1b2733" strokeWidth="2.3" strokeLinecap="round" />
          </Art>
        </DockApp>
        <DockApp>
          <Art>
            <rect x="17" y="10" width="31" height="40" rx="2" fill="#2a8be0" />
            <path d="M17 12a2 2 0 0 1 2-2h27a2 2 0 0 1 2 2v4H17z" fill="#1d56a5" />
            <path d="M28 16h10v11H28z" fill="#3fa4ee" /><path d="M38 16h10v11H38z" fill="#57c5fa" />
            <path d="M17 50l17-12 16-8v18a2 2 0 0 1-2 2z" fill="#58b8f2" />
            <path d="M26 27h14v10l-8 5-6-5z" fill="#1c66bd" />
            <rect x="5" y="19" width="23" height="23" rx="2.5" fill="#1a62c0" />
            <ellipse cx="16.5" cy="30.5" rx="4.6" ry="5.4" stroke="#fff" strokeWidth="3" />
          </Art>
        </DockApp>
        <DockApp running bg="bg-gradient-to-b from-white to-[#d5d5d8]">
          <Art>
            <circle cx="30.5" cy="30.5" r="26.5" fill="#2f87e2" />
            <circle cx="30.5" cy="30.5" r="23.5" stroke="#a9d5fb" strokeWidth="3" strokeDasharray="0.8 2.4" />
            <path d="M49 14L27 26.500l7 7.500z" fill="#e8453a" />
            <path d="M12 46l15-19.500 7 7.500z" fill="#f2f2f2" />
          </Art>
        </DockApp>
        <DockApp bg="bg-[#f2f2f4]">
          <Art>
            <path d="M28 0h33v38L40 22z" fill="#72d56c" /><path d="M0 0h17v26L0 18z" fill="#7bdc74" />
            <path d="M30 24l31 26V22z" fill="#6fcf6a" />
            <path d="M0 26l16 14v21H0z" fill="#e18ccb" /><path d="M32 46l20 15H32z" fill="#f6cb46" />
            <path d="M16 0h14v61H16z" fill="#d9d9e2" /><path d="M16 0h13v26H16z" fill="#3b7ae8" />
            <path d="M46 0c0 12 6 17 15 19" stroke="#cfd0dc" strokeWidth="5" />
            <circle cx="22.5" cy="38" r="16" fill="#f5f6fa" /><circle cx="22.5" cy="38" r="13.5" fill="#3a78f0" />
            <path d="M22.500 28l7 18-7-4-7 4z" fill="#fff" />
          </Art>
        </DockApp>
        <DockApp bg="bg-gradient-to-b from-[#3a73ec] to-[#5ac0f8]">
          <Art>
            <rect x="9" y="16.5" width="43" height="28" rx="3" fill="#f3f3f1" />
            <path d="M10 43.500l15-14M51 43.500l-15-14" stroke="#9a9a98" strokeWidth="1.2" />
            <path d="M10 18l17 16c2 2 5 2 7 0l17-16" stroke="#8f8f8d" strokeWidth="1.5" fill="#fbfbfa" />
          </Art>
        </DockApp>
        <DockApp>
          <div className="flex h-full flex-col items-center bg-gradient-to-b from-white to-[#efefed]">
            <span className="h-[19px] w-full bg-[#e2685c] text-center text-[12.5px] leading-[20px] font-bold text-white">APR</span>
            <span className="text-[36px] leading-[38px] font-light tracking-[-1px] text-[#222]">30</span>
          </div>
        </DockApp>
        <div className="relative">
          <div className="absolute top-2 right-[-2px] h-11 w-2 rounded-r-[3px] bg-gradient-to-b from-[#b9b9b6] via-[#f09a37] to-[#67c466]" />
          <DockApp bg="bg-gradient-to-b from-[#ab8954] to-[#9a7244]">
            <Art>
              <circle cx="31" cy="30.5" r="19" stroke="#7f6136" strokeWidth="1.5" fill="#a07c48" />
              <circle cx="31" cy="25.5" r="6.8" fill="#8a6a3d" />
              <path d="M17 43c3-8 25-8 28 0a19 19 0 0 1-28 0z" fill="#8a6a3d" />
            </Art>
          </DockApp>
        </div>
        <DockApp>
          <Art>
            <g strokeWidth="1.2">
              <circle cx="11.5" cy="15" r="5" stroke="#2f7bf6" /><circle cx="11.5" cy="15" r="3.2" fill="#2f7bf6" />
              <circle cx="11.5" cy="30.5" r="5" stroke="#e5453b" /><circle cx="11.5" cy="30.5" r="3.2" fill="#e5453b" />
              <circle cx="11.5" cy="46" r="5" stroke="#f09a37" /><circle cx="11.5" cy="46" r="3.2" fill="#f09a37" />
              <path d="M22 15h32M22 30.500h32M22 46h32" stroke="#b9b9bb" />
            </g>
          </Art>
        </DockApp>
        <DockApp bg="bg-gradient-to-b from-white to-[#e5e5e0]">
          <Art>
            <rect width="61" height="15.5" fill="#f7cf47" /><path d="M0 16.300h61" stroke="#8d8a7b" strokeWidth="1" />
            <path d="M1 18.500h59" stroke="#aaa" strokeDasharray="0.8 1.4" /><path d="M0 31h61M0 46h61" stroke="#c8c8c4" />
          </Art>
        </DockApp>
        <DockApp>
          <Art>
            <circle cx="24" cy="38" r="16.5" fill="#f07d4b" />
            <rect x="20" y="8" width="33" height="32" rx="3" fill="#5bc8f3" opacity="0.9" />
            <path d="M12 36c7 0 8-18 13-16 4 2-4 16 0 17 5 0 7-17 12-16 4 1-3 15 1 16 5 0 5-9 13-10" stroke="#14365c" strokeWidth="3.2" strokeLinecap="round" />
          </Art>
        </DockApp>
        <DockApp bg="bg-gradient-to-b from-[#ee6a7c] to-[#e63b41]">
          <Art>
            <path d="M22 15l22-5v32M22 15v29" stroke="#fff" strokeWidth="4" /><path d="M22 14l22-5v7l-22 5z" fill="#fff" />
            <ellipse cx="17.5" cy="45" rx="6" ry="5" fill="#fff" /><ellipse cx="39.5" cy="42" rx="6" ry="5" fill="#fff" />
          </Art>
        </DockApp>
        <DockApp bg="bg-gradient-to-b from-[#83f37f] to-[#55bf4d]">
          <Art>
            <ellipse cx="30.5" cy="29" rx="23" ry="18.5" fill="#f3f8f1" />
            <path d="M17 41c1 4-1 7-4 9 5 1 10-1 13-5z" fill="#f3f8f1" />
          </Art>
        </DockApp>
        <DockApp bg="bg-gradient-to-b from-[#63c4fb] to-[#3264e8]">
          <Art>
            <path d="M14 9h33l2 15H12z" fill="#f5f7fb" /><path d="M12 24h37v3H12z" fill="#cdd6e6" />
            <circle cx="30.5" cy="16" r="5.5" fill="#e4573d" /><path d="M30.500 16v-5.500a5.500 5.500 0 0 1 5 7.700z" fill="#5bb7ee" /><path d="M30.500 16l5 2.300a5.500 5.500 0 0 1-7 2.800z" fill="#5fc25b" />
            <path d="M30.500 27v23" stroke="#e5e9f2" strokeWidth="2.6" /><rect x="20" y="50" width="21" height="3" rx="1.5" fill="#dfe4ee" />
          </Art>
        </DockApp>
        <DockApp bg="bg-gradient-to-b from-[#93f57b] to-[#58cc3b]">
          <Art>
            <g fill="#f7fdf4"><rect x="11" y="39" width="8" height="13" rx="1.5" /><rect x="22" y="28" width="8" height="24" rx="1.5" /><rect x="33" y="9" width="7" height="43" rx="1.5" /><rect x="43" y="20" width="8" height="32" rx="1.5" /></g>
          </Art>
        </DockApp>
        <DockApp bg="bg-gradient-to-b from-[#f5b54b] to-[#ee8b38]">
          <Art>
            <path d="M10 51.500h42" stroke="#fbd9a5" strokeWidth="2" />
            <path d="M46 12c3-1 5 0 4 4L22 45l-11 6 3-12z" fill="#fbfaf8" /><path d="M35 25l5 4M18 44l22-24" stroke="#9a9a98" strokeWidth="1.2" />
          </Art>
        </DockApp>
        <DockApp bg="bg-gradient-to-b from-[#50b7ee] to-[#2655d8]">
          <Art>
            <g stroke="#fff" strokeWidth="4.6" strokeLinecap="round"><path d="M34 13L18 40M27 13l20 34M11 37.500h25M44 37.500h6M15.500 45l-1 2" /></g>
          </Art>
        </DockApp>
        <DockApp running clip={false}>
          <Art>
            <g strokeWidth="9" strokeLinecap="round">
              <path d="M13 24.500h12" stroke="#66c5ee" /><path d="M36 14v11" stroke="#5eb287" />
              <path d="M25 37v11" stroke="#cc375e" /><path d="M36 36.500h12" stroke="#e3b54d" />
            </g>
            <path d="M29.500 19h-4.500a4.500 4.500 0 1 1 4.500-4.500z" fill="#66c5ee" /><path d="M42.500 29v-4.500A4.500 4.500 0 1 1 47 29z" fill="#5eb287" />
            <path d="M20 32v4.500a4.500 4.500 0 1 1-4.500-4.500z" fill="#cc375e" /><path d="M31.500 43H36a4.500 4.500 0 1 1-4.500 4.500z" fill="#e3b54d" />
          </Art>
          <span className="absolute -top-[9px] left-[40px] flex h-[30px] w-[30px] items-center justify-center rounded-full bg-[#ea5545] text-[17px] text-white shadow-[0_1px_4px_rgba(0,0,0,0.3)]">1</span>
        </DockApp>
        <DockApp>
          <Art>
            <circle cx="19" cy="19" r="10.5" fill="#3cabe8" /><circle cx="41" cy="41" r="10.5" fill="#2164b4" /><circle cx="30" cy="30" r="20.5" fill="#2b8bd4" />
            <path d="M37 23c-2-5-13-5-13 1 0 7 13 4 13 11 0 6-12 7-14 0" stroke="#fff" strokeWidth="4.6" strokeLinecap="round" />
          </Art>
        </DockApp>
        <DockApp running bg="bg-transparent" clip={false} flat>
          <Art className="-mt-[2.5px] -ml-[2.5px] h-[66px] w-[66px]">
            <circle cx="30.5" cy="30.5" r="30" fill="#2458e8" />
            <path d="M30.500 15a13 13 0 0 0-4 25v9h8v-9a13 13 0 0 0-4-25z" fill="#fff" /><path d="M43.500 28a13 13 0 0 1-9 12l-3-6z" fill="#8fb0f7" />
            <circle cx="30.5" cy="28" r="4.5" fill="#2458e8" />
          </Art>
        </DockApp>
        <DockApp>
          <Art>
            <circle cx="30.5" cy="30.5" r="26" fill="#f5c342" />
            <path d="M30.500 30.500L8 17.500A26 26 0 0 1 53 17.500H30.500z" fill="#dc4937" />
            <path d="M8 17.500a26 26 0 0 0 20.500 39L41.500 37 30.500 30.500z" fill="#4aa150" />
            <circle cx="30.5" cy="30.5" r="12.5" fill="#fff" /><circle cx="30.5" cy="30.5" r="9.8" fill="#4480e8" />
          </Art>
        </DockApp>
        <DockApp running bg="bg-gradient-to-b from-[#15171b] via-[#33363d] to-[#101114]">
          <Art>
            <path d="M8 0v61M16 0v61M24 0v61M32 0v61M48 0v61M55 0v61" stroke="#464a52" strokeWidth="0.6" />
            <path d="M0 34l7 3 6-3 5 4 5-12 4 12 5 5 5-14 2-8 3 6 3 11 6-8 4-6 6-4" stroke="#e6e6e6" strokeWidth="1.2" />
            <path d="M40.500 0v61" stroke="#2f7fc2" strokeWidth="2" /><circle cx="40.5" cy="20" r="2.6" fill="#59b7f5" />
          </Art>
        </DockApp>
        <DockApp running bg="bg-transparent" clip={false} flat>
          <Art className="-mt-[2.5px] -ml-[2.5px] h-[66px] w-[66px]">
            <circle cx="30.5" cy="30.5" r="30" fill="#fbfafa" />
            <path d="M19 50a21 21 0 1 1 23 0l-4-9a12 12 0 1 0-15 0z" fill="#e8954a" />
            <path d="M30.500 23a7 7 0 0 0-4 12.700L25 50h11l-1.500-14.300a7 7 0 0 0-4-12.700z" fill="#21355f" />
          </Art>
        </DockApp>
        <DockApp bg="bg-[#f5eff3]">
          <div className="grid h-full grid-cols-3 grid-rows-3 gap-[3px] p-[9.5px]">
            <i className="rounded-[3px] bg-[#7ce05f]" /><i className="rounded-[3px] bg-[#f2c545]" /><i className="rounded-[3px] bg-[#ea9638]" />
            <i className="rounded-[3px] bg-[#cf3a32]" /><i className="rounded-[3px] bg-[#9aa09f]" /><i className="rounded-[3px] bg-[#ed5569]" />
            <i className="rounded-[3px] bg-[#9a4ed0]" /><i className="rounded-[3px] bg-[#3897f2]" /><i className="rounded-[3px] bg-[#67cfa4]" />
          </div>
        </DockApp>
        <DockApp bg="bg-[#22232d]">
          <Art>
            <path d="M14 0h11L9 40 0 30V16z" fill="#c8322d" /><path d="M10 30l24 31H6L0 52V30z" fill="#86262a" /><path d="M0 32v29h18z" fill="#b82d2b" />
            <circle cx="30.5" cy="30.5" r="11.5" fill="#cb312c" />
          </Art>
        </DockApp>
        <DockApp bg="bg-[#e9e4e6]">
          <Art>
            <rect x="17.5" y="4.5" width="26" height="52" rx="5" fill="#18191b" />
            <rect x="19.5" y="6.5" width="22" height="48" rx="3.5" fill="#f0a48b" />
            <path d="M41.500 22C35 28 24 34 22 54.500h16a3.500 3.500 0 0 0 3.500-3.500z" fill="#2f7f9e" /><path d="M41.500 34C34 40 24 46 20 53c1 1 1 1.500 3 1.500h15a3.500 3.500 0 0 0 3.500-3.500z" fill="#15405e" />
            <rect x="26.5" y="7.5" width="8" height="2.6" rx="1.3" fill="#18191b" />
          </Art>
        </DockApp>
        <DockApp running bg="bg-gradient-to-b from-[#4fb2ee] to-[#2357d6]" clip={false}>
          <Art className="h-full w-full overflow-visible"><Blueprint /><Hammer /></Art>
        </DockApp>
      </div>
      <span className="mt-[-1px] ml-[28px] h-[70px] w-0.5 bg-[#cdb0ba]" />
      <div className="ml-[25px] flex gap-5">
        <DockApp running bg="bg-gradient-to-b from-[#4fb2ee] to-[#2357d6]" clip={false}>
          <Art className="h-full w-full overflow-visible">
            <Blueprint />
            <path d="M50 15l13 6c2 1 2 2 1 4L45 62c-1 2-3 2-4 1l-14-7c-2-1-2-2-1-4l20-35c1-2 2-3 4-2z" fill="#111" />
            <path d="M33 30l16 16M31 40l15-3" stroke="#e8e8ea" strokeWidth="4.500" strokeLinecap="round" />
          </Art>
        </DockApp>
        <DockApp running bg="bg-gradient-to-tr from-[#2458ea] to-[#3b7bf5]">
          <div className="flex h-full items-center justify-center pb-1 text-[18px] font-semibold tracking-[-0.8px] text-white">zoom</div>
        </DockApp>
        <DockApp running bg="bg-gradient-to-b from-[#8339a8] to-[#5a2d8a]">
          <FaGithub className="mt-[4px] ml-[4px] h-[53px] w-[53px] text-white" />
        </DockApp>
        <DockApp running bg="bg-[#cf7350]">
          <Burst className="mt-[7px] ml-[7px] h-[47px] w-[47px] text-[#fdf3ec]" w={3.6} />
        </DockApp>
      </div>
      <span className="mt-[-1px] ml-[28px] h-[70px] w-0.5 bg-[#cdb0ba]" />
      <div className="ml-[20px] flex gap-[10px]">
        <Thumb />
        <Thumb second />
      </div>
      <svg viewBox="0 0 54 72" className="-mt-[6px] ml-[17px] h-[72px] w-[54px]">
        <path d="M3 14C2 6 10 8 13 1l6 5 8-5 7 5 9-2 3 6 5 4z" fill="#d9dcda" />
        <path d="M10 13l5-7 6 8zM30 12l8-6 3 8z" fill="#7c6a60" /><path d="M20 10l6-3 4 6z" fill="#5fc6b6" />
        <path d="M0 12h54l-7 54c-1 4-5 6-20 6S8 70 7 66z" fill="#dedddd" />
        <path d="M12 22l10 14-8 18zM44 18l-10 20 8 22zM24 44l10 22H18z" fill="#ebeaea" />
        <ellipse cx="27" cy="13" rx="26" ry="4" fill="none" stroke="#c4c3c4" strokeWidth="1.5" />
      </svg>
    </nav>
  );
}

export default function App() {
  return (
    <main className="relative h-[1800px] w-[2880px] overflow-hidden bg-[#f5dce3] font-['Inter',sans-serif]">
      <MenuBar />
      <PadWindow />
      <PhoneWindow />
      <Caption />
      <Popover />
      <Dock />
    </main>
  );
}
